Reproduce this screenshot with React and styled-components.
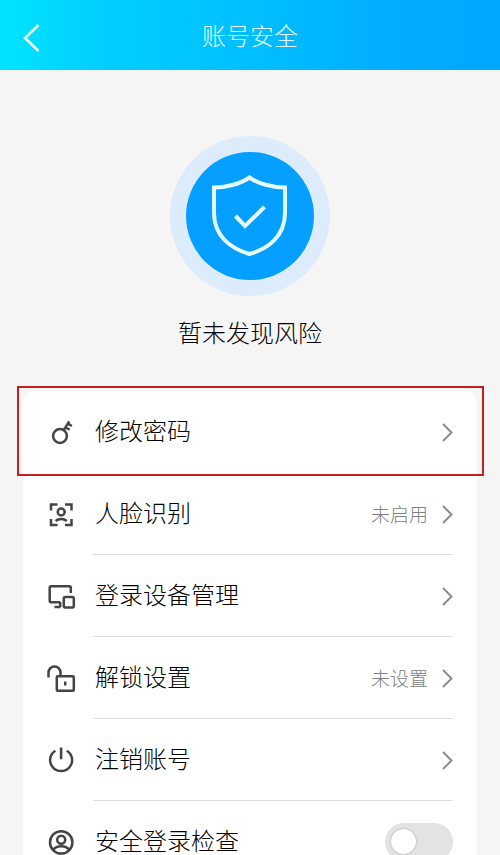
import React from "react";
import styled, { createGlobalStyle } from "styled-components";

const GlobalStyle = createGlobalStyle`
  *, *::before, *::after { box-sizing: border-box; }
  body {
    margin: 0;
    background: #f5f5f5;
    font-family: KaiTi, "Noto Sans CJK SC", sans-serif;
    font-weight: 300;
  }
  button, input { font: inherit; color: inherit; }
`;

const Screen = styled.div`
  display: flex;
  flex-direction: column;
  height: 100vh;
  background: #f5f5f5;
  color: #000;
`;

const Header = styled.header`
  display: grid;
  grid-template-columns: 64px 1fr 64px;
  align-items: center;
  flex: none;
  height: 70px;
  background: linear-gradient(90deg, #00e4ff 0%, #00d0ff 18%, #00bfff 50%, #00abff 82%, #00a8ff 100%);
  color: #eaffff;
`;

const BackButton = styled.button`
  display: flex;
  align-items: center;
  height: 64px;
  margin-top: 6px;
  padding: 0 0 0 22px;
  border: 0;
  background: none;
`;

const Title = styled.h1`
  margin: 0;
  font-size: 24px;
  line-height: 32px;
  font-weight: 300;
  text-align: center;
`;

const Content = styled.main`
  flex: 1;
  min-height: 0;
  padding: 66px 23px 0;
  overflow-y: auto;
  scrollbar-width: none;
`;

const Status = styled.section`
  display: flex;
  flex-direction: column;
  align-items: center;
  gap: 20px;
`;

const Halo = styled.div`
  display: grid;
  place-items: center;
  width: 160px;
  height: 160px;
  border-radius: 50%;
  background: #dcecfa;
`;

const Disc = styled.div`
  display: grid;
  place-items: center;
  width: 128px;
  height: 128px;
  border-radius: 50%;
  background: #05a0ff;
`;

const StatusText = styled.p`
  margin: 0;
  font-size: 24px;
  line-height: 32px;
`;

const Card = styled.ul`
  margin: 43px 0 0;
  padding: 0;
  list-style: none;
  border-radius: 12px;
  background: #fff;
`;

const Item = styled.li`
  position: relative;
`;

const Highlight = styled.span`
  position: absolute;
  inset: -5px -7px -3px -6px;
  border: 2px solid #c5201f;
  pointer-events: none;
`;

const Row = styled.button`
  display: flex;
  align-items: center;
  gap: 20px;
  width: 100%;
  height: 82px;
  padding: 0 24px;
  border: 0;
  background: none;
  text-align: left;
  cursor: pointer;
`;

const RowBody = styled.span`
  display: flex;
  align-items: center;
  gap: 14px;
  flex: 1;
  height: 100%;
  margin-left: -2px;
  padding-left: 2px;
  border-bottom: 1px solid ${(p) => (p.$divided ? "#e0e0e0" : "transparent")};
`;

const Label = styled.span`
  flex: 1;
  padding-bottom: 4px;
  font-size: 24px;
  line-height: 24px;
`;

const Value = styled.span`
  font-size: 19px;
  line-height: 28px;
  color: #808080;
`;

const Glyph = styled.svg`
  flex: none;
  display: block;
  fill: none;
  stroke: ${(p) => p.$color || "#444"};
  stroke-width: ${(p) => p.$weight || 2.5};
`;

const Switch = styled.input`
  appearance: none;
  display: flex;
  align-items: center;
  flex: none;
  width: 68px;
  height: 38px;
  margin: 0;
  padding: 0 6px;
  border-radius: 19px;
  background: #e3e3e3;
  cursor: pointer;

  &::before {
    content: "";
    width: 25px;
    height: 25px;
    border-radius: 50%;
    background: #fff;
    box-shadow: 0 0 2px #999;
  }

  &:checked {
    justify-content: flex-end;
    background: #05a0ff;
  }
`;

const icons = {
  key: (
    <>
      <circle cx="13" cy="18" r="6.9" />
      <path d="M16.7 12.2 22.2 3.4M18.4 9.2l4.2 2.6M20.6 5.4l4.2 2.6" />
    </>
  ),
  face: (
    <>
      <path d="M4 10.5V4.5h6.5M18 4.5h6.5v6M24.5 19v6H18M10.5 25H4v-6" />
      <circle cx="14.2" cy="12" r="3.5" />
      <path d="M8.6 21c2.8-2.6 8.4-2.6 11.2 0" />
    </>
  ),
  devices: (
    <>
      <path d="M23.8 11V5.7a1.5 1.5 0 0 0-1.5-1.5H4.2a1.5 1.5 0 0 0-1.5 1.5v13a1.5 1.5 0 0 0 1.5 1.5h9M13.2 20V25M7.5 25h6" />
      <rect x="16.8" y="15" width="10" height="10.4" rx="1.5" />
    </>
  ),
  unlock: (
    <>
      <path d="M1.5 13.5V8.5a6 6 0 0 1 12 0v4" />
      <rect x="9.8" y="12.3" width="17" height="14.4" rx="1" />
      <path d="M18.2 17.5v4" />
    </>
  ),
  power: <path d="M8.4 4.7a11 11 0 1 0 11.4 0M14.1 1.5v11.8" />,
  account: (
    <>
      <circle cx="14.2" cy="14.4" r="11.2" />
      <circle cx="14.2" cy="11.7" r="4" />
      <path d="M6.2 21.8c3.5-4.6 12.5-4.6 16 0" />
    </>
  ),
};

function RowIcon({ name }) {
  return (
    <Glyph width="28" height="28" viewBox="0 0 28 28" overflow="visible" aria-hidden="true">
      {icons[name]}
    </Glyph>
  );
}

function Chevron() {
  return (
    <Glyph $color="#8c8c8c" $weight={2} width="11" height="20" viewBox="0 0 11 20" aria-hidden="true">
      <path d="M1 2 9.5 10.5 1 19" />
    </Glyph>
  );
}

const rows = [
  { icon: "key", label: "修改密码", highlighted: true },
  { icon: "face", label: "人脸识别", value: "未启用" },
  { icon: "devices", label: "登录设备管理" },
  { icon: "unlock", label: "解锁设置", value: "未设置" },
  { icon: "power", label: "注销账号" },
];

export default function App() {
  return (
    <Screen>
      <GlobalStyle />
      <Header>
        <BackButton type="button" aria-label="返回">
          <Glyph $color="#eaffff" $weight={2.6} width="18" height="30" viewBox="0 0 18 30" aria-hidden="true">
            <path d="M16.5 2 3 15l13.5 13" />
          </Glyph>
        </BackButton>
        <Title>账号安全</Title>
      </Header>
      <Content>
        <Status>
          <Halo>
            <Disc>
              <Glyph $color="#e4fbff" $weight={4} width="76" height="84" viewBox="0 0 76 84" aria-hidden="true">
                <path d="M37.5 3.5C29 9.5 15 13.5 2 13.5V39C2 63 20 75 37.5 80 55 75 73 63 73 39V13.5C60 13.5 46 9.5 37.5 3.5Z" />
                <path d="M23.5 42 33 52 52.5 33" />
              </Glyph>
            </Disc>
          </Halo>
          <StatusText>暂未发现风险</StatusText>
        </Status>
        <Card>
          {rows.map((row) => (
            <Item key={row.icon}>
              <Row type="button">
                <RowIcon name={row.icon} />
                <RowBody $divided={!row.highlighted}>
                  <Label>{row.label}</Label>
                  {row.value && <Value>{row.value}</Value>}
                  <Chevron />
                </RowBody>
              </Row>
              {row.highlighted && <Highlight />}
            </Item>
          ))}
          <Item>
            <Row as="label" htmlFor="login-check">
              <RowIcon name="account" />
              <RowBody>
                <Label>安全登录检查</Label>
                <Switch id="login-check" type="checkbox" role="switch" />
              </RowBody>
            </Row>
          </Item>
        </Card>
      </Content>
    </Screen>
  );
}
